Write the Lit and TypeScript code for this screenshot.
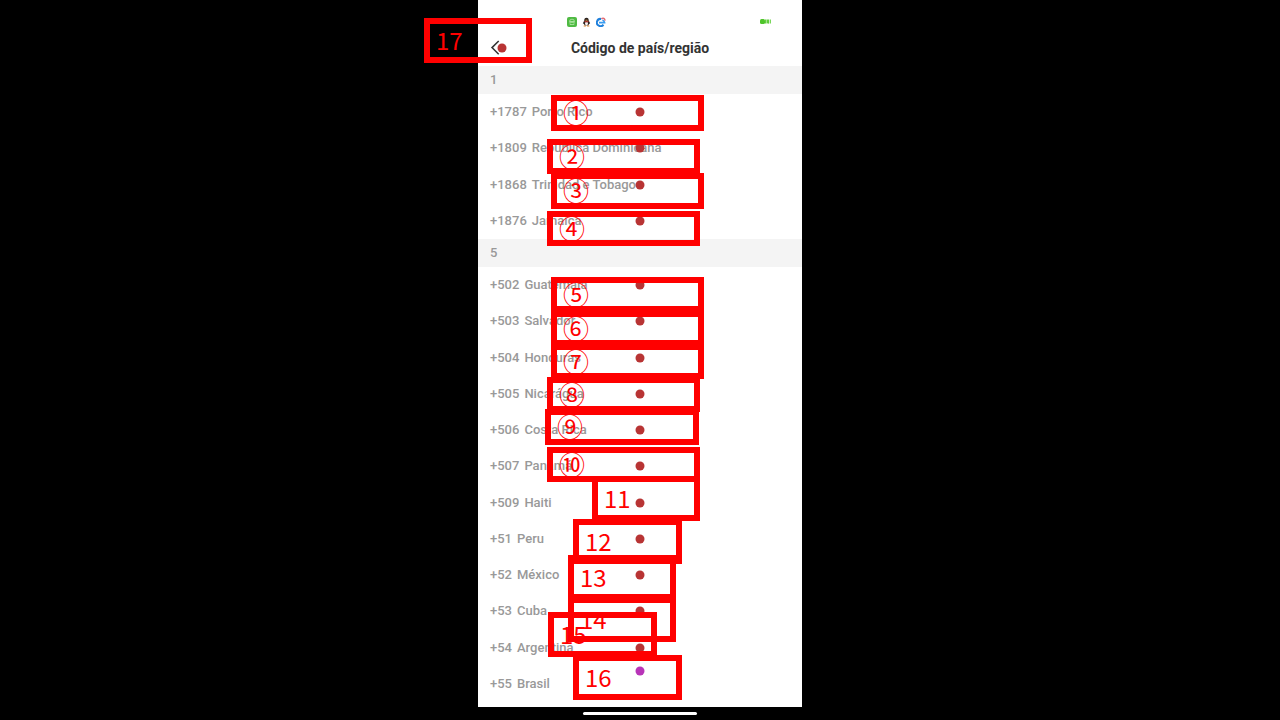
import { LitElement, html, css } from "lit";
import { customElement } from "lit/decorators.js";
import { styleMap } from "lit/directives/style-map.js";

interface Country { code: string; name: string; }
interface Section { title: string; rows: Country[]; }
interface Mark { label: string; x: number; y: number; w: number; h: number; }

const c = (code: string, name: string): Country => ({ code, name });

const SECTIONS: Section[] = [
  { title: "1", rows: [c("+1787", "Porto Rico"), c("+1809", "República Dominicana"), c("+1868", "Trinidad e Tobago"), c("+1876", "Jamaica")] },
  { title: "5", rows: [c("+502", "Guatemala"), c("+503", "Salvador"), c("+504", "Honduras"), c("+505", "Nicarágua"), c("+506", "Costa Rica"), c("+507", "Panamá"), c("+509", "Haiti"), c("+51", "Peru"), c("+52", "México"), c("+53", "Cuba"), c("+54", "Argentina"), c("+55", "Brasil")] },
];

const m = (label: string, x: number, y: number, w: number, h: number): Mark => ({ label, x, y, w, h });

// Annotation boxes, placed on the screen's own coordinate system.
const MARKS: Mark[] = [
  m("①", 73, 95, 153, 36), m("②", 69, 139, 153, 35), m("③", 73, 173, 153, 36), m("④", 69, 211, 153, 35),
  m("⑤", 73, 277, 153, 35), m("⑥", 73, 311, 153, 35), m("⑦", 73, 344, 153, 35), m("⑧", 69, 377, 153, 35),
  m("⑨", 67, 409, 154, 36), m("⑩", 69, 447, 153, 35), m("11", 114, 476, 108, 45), m("12", 95, 519, 109, 45),
  m("13", 90, 555, 108, 45), m("14", 90, 597, 108, 45), m("15", 70, 612, 109, 45), m("16", 95, 655, 109, 45),
  m("17", -54, 18, 108, 45),
];

@customElement("app-root")
export class AppRoot extends LitElement {
  static styles = css`
    :host { display: block; background: #000; font-family: Roboto, "Liberation Sans", sans-serif; }
    * { box-sizing: border-box; }
    svg { display: block; }
    .stage { display: flex; justify-content: center; min-height: 100vh; overflow: hidden; }
    .phone { position: relative; display: flex; flex-direction: column; width: 100%; max-width: 324px; }
    .screen { flex: 1; display: flex; flex-direction: column; background: #fff; padding-bottom: 5px; }
    .status { display: flex; align-items: center; justify-content: space-between; height: 30px; padding: 13px 31px 0 89px; }
    .tray { display: flex; align-items: center; gap: 5px; }
    .bar { display: grid; grid-template-columns: 40px 1fr 40px; align-items: center; height: 36px; }
    .back { display: flex; align-items: center; height: 36px; padding: 0 0 0 12px; border: 0; background: none; }
    .title { margin: 0; font-size: 14px; line-height: 20px; font-weight: 700; color: #333; text-align: center; }
    .list { flex: 1; display: flex; flex-direction: column; }
    .group { margin: 0; height: 28px; padding: 0 12px; background: #f4f4f4; color: #999; font-size: 13px; line-height: 28px; font-weight: 500; }
    .rows { display: flex; flex-direction: column; margin: 0; padding: 0; list-style: none; }
    .item { flex: 1; display: flex; }
    .row { position: relative; flex: 1; display: flex; align-items: center; gap: 5px; padding: 0 12px; border: 0; background: none; color: #999; font-family: inherit; font-size: 13px; line-height: 16px; font-weight: 500; }
    .dot { position: absolute; width: 9px; height: 9px; border-radius: 50%; background: #b83434; left: 50%; top: 50%; transform: translate(-50%, -50%); }
    .purple { background: #b834b8; top: 14%; }
    .onback { left: 24px; top: 48px; }
    .home { display: flex; align-items: center; justify-content: center; height: 13px; }
    .pill { width: 114px; height: 3px; border-radius: 2px; background: #fff; }
    .mark { position: absolute; display: flex; align-items: center; padding: 0 0 2px 6px; border: 6px solid #f00; color: #f00; font-family: "Noto Sans CJK SC", sans-serif; font-size: 24px; line-height: 24px; pointer-events: none; }
    .ring { font-size: 26px; }
  `;

  render() {
    return html`
      <main class="stage">
        <div class="phone">
          <div class="screen">
            <div class="status">
              <div class="tray">
                <svg width="10" height="10" viewBox="0 0 10 10"><rect width="10" height="10" rx="2" fill="#4fba43"/><path d="M2.5 4.5a2.5 2.3 0 0 1 5 0zM2.3 5.3h5.4M3 6.2v1.3h4V6.2" fill="none" stroke="#c4efb9" stroke-width=".7"/></svg>
                <svg width="9" height="10" viewBox="0 0 9 10"><path d="M4.5.8C2.8.8 2.3 2 2.3 3.4L.9 6.2c0 .8.5.8 1 .3L2.6 8.5h3.8l.7-2c.5.5 1 .4 1-.3L6.7 3.4C6.7 2 6.2.8 4.5.8z" fill="#29211f"/><ellipse cx="4.5" cy="6.6" rx="1.5" ry="1.8" fill="#f4eeee"/><path d="M2.5 4.4q2 1.1 4 0" stroke="#d63b30" stroke-width="1" fill="none"/><path d="M3.5 3.2h2" stroke="#f1a340" stroke-width=".9"/><path d="M1.7 9h2.2M5.1 9h2.2" stroke="#e28c32" stroke-width="1"/></svg>
                <svg width="10" height="10" viewBox="0 0 10 10"><path d="M7.4 7.6A3.6 3.6 0 1 1 5.2 2" fill="none" stroke="#1f80dc" stroke-width="2"/><path d="M3 5.6h5.6A3 3 0 0 0 6.4 3" fill="none" stroke="#3c9df0" stroke-width="1.6"/><path d="M5.4 1.6Q8.4.2 9.2 3.6" fill="none" stroke="#e2626b" stroke-width="1.3"/></svg>
              </div>
              <svg width="11" height="5" viewBox="0 0 11 5"><rect width="5" height="5" rx="1.5" fill="#4fc52b"/><path d="M5.5.5v4M7 4.5v-4l1.5 4v-4M10.3.5v4" fill="none" stroke="#62cf3e" stroke-width="1.1"/></svg>
            </div>
            <header class="bar">
              <button class="back" aria-label="Voltar"><svg width="10" height="16" viewBox="0 0 10 16"><path d="M8.7 1L2 7.6l6.7 6.6" fill="none" stroke="#333" stroke-width="1.5"/></svg></button>
              <h1 class="title">Código de país/região</h1>
            </header>
            <div class="list">
              ${SECTIONS.map((s) => html`
                <h2 class="group">${s.title}</h2>
                <ul class="rows" style=${styleMap({ flex: String(s.rows.length) })}>
                  ${s.rows.map((r) => html`<li class="item"><button class="row"><span>${r.code}</span><span>${r.name}</span><i class="dot ${r.name === "Brasil" ? "purple" : ""}"></i></button></li>`)}
                </ul>`)}
            </div>
          </div>
          <div class="home"><div class="pill"></div></div>
          <i class="dot onback"></i>
          ${MARKS.map((k) => html`<div class="mark ${k.label.length === 1 ? "ring" : ""}" style=${styleMap({ left: k.x + "px", top: k.y + "px", width: k.w + "px", height: k.h + "px" })}>${k.label}</div>`)}
        </div>
      </main>`;
  }
}
